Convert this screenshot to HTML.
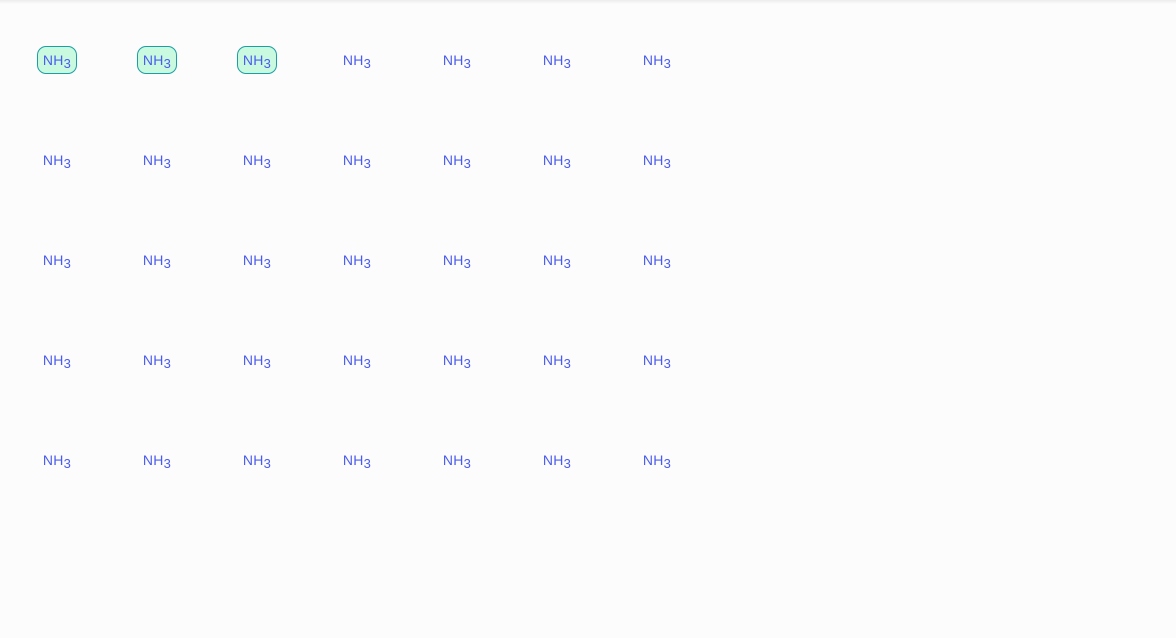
<!DOCTYPE html>
<html><head><style>
html,body{margin:0;padding:0;width:1176px;height:638px;background:#fcfcfc;overflow:hidden;font-family:"Liberation Sans",sans-serif}
.top{position:absolute;left:0;top:0;width:1176px;height:4px;background:linear-gradient(#ececec,#fcfcfc)}
.c{position:absolute;width:100px;height:28px;display:flex;align-items:center;justify-content:center}
.t{color:#4a5cf0;font-size:14px;line-height:18px;padding:3.5px 4.5px 4px;border:1.5px solid transparent;border-radius:9px;letter-spacing:0.3px}
.t sub{font-size:13px;vertical-align:-3px;line-height:0}
.h .t{background:#c9f9df;border-color:#1b9fa6}
</style></head><body><div class="top"></div>
<script>
for(let r=0;r<5;r++)for(let i=0;i<7;i++){
document.write('<div class="c'+(r==0&&i<3?' h':'')+'" style="left:'+(7+i*100)+'px;top:'+(46+r*100)+'px"><span class="t">NH<sub>3</sub></span></div>');}
</script>
</body></html>
